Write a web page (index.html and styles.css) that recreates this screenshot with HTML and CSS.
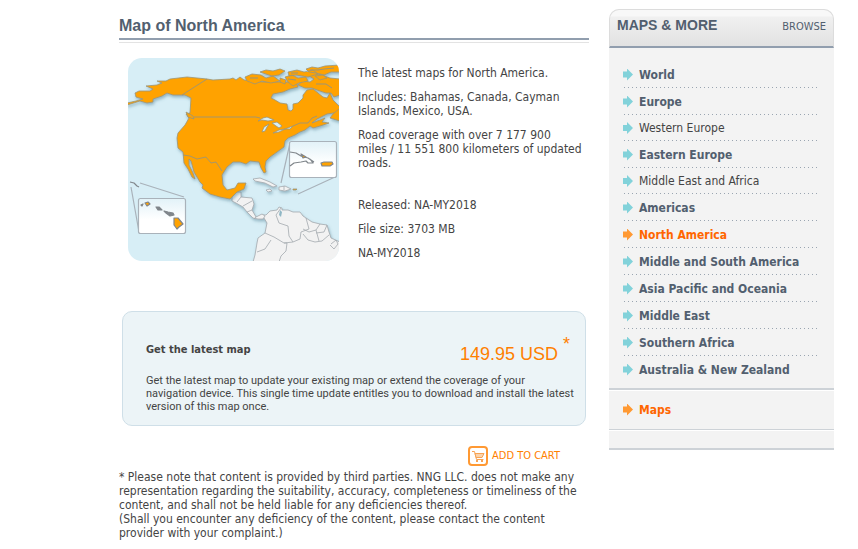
FILE: index.html
```
<!DOCTYPE html>
<html lang="en">
<head>
  <meta charset="UTF-8">
  <meta name="viewport" content="width=device-width, initial-scale=1.0">
  <title>Map of North America</title>
  <link rel="stylesheet" href="styles.css">
</head>
<body>
  <div class="page">
    <main class="content">
      <h1>Map of North America</h1>

      <div class="product">
        <svg class="map" width="211" height="203" viewBox="0 0 211 203" role="img" aria-label="Map of North America">
          <defs>
            <linearGradient id="inset" x1="0" y1="0" x2="0" y2="1">
              <stop offset="0" stop-color="#e2f2f8"/>
              <stop offset="0.6" stop-color="#fff"/>
            </linearGradient>
            <filter id="shadow" x="-10%" y="-10%" width="120%" height="120%">
              <feDropShadow dx="1" dy="2" stdDeviation="1.5" flood-color="#4d7f93" flood-opacity="0.5"/>
            </filter>
          </defs>
          <rect width="211" height="203" fill="#d7eef6"/>

          <!-- South and Central America, Caribbean -->
          <g fill="#f2f2f2" stroke="#a3a9ae" stroke-width="0.8" stroke-linejoin="round" filter="url(#shadow)">
            <path d="M134 157L138 157L142 153L149 152L151 149L154 150L154 152L160 152L165 154L172 154L175 158L178 160L184 164L192 166L199 167L201 174L203 180L212 184V204H125L127 197L129 185L130 180L137 175L139 165L136 160Z"/>
            <path d="M104 139L108 134H113L113 139L124 140L126 146L124 152L128 159L134 156L137 158L135 161L130 161L125 160L119 154L115 149L108 145L104 143Z"/>
            <path d="M113 139L109 144M124 143L115 148M124 152L119 154M128 159L126 161" fill="none"/>
            <path d="M125 121L132 120L142 124L149 128L145 129L137 125L127 123ZM151 129L157 128L163 131L157 133L151 132ZM156 128V132M138 132L142 131L144 133L140 134Z"/>
            <path d="M153 150L148 157L151 165L160 168L161 178L165 184L172 181L173 174L181 171L178 160M192 166L188 172L181 174L175 171M199 167L196 174L188 175M175 176L180 182L187 184L194 183L201 177M188 172L191 183M137 175L146 179L156 185L159 185L158 193L153 198L151 204M156 185L165 184M129 194L137 191L143 182M203 186L208 182L210 186L206 191L202 187" fill="none"/>
          </g>
          <path d="M152 152L154 154L153 159L151 157Z" fill="#90b7c5"/>

          <!-- Canada, USA, Mexico -->
          <g fill="#ffa200" stroke="#9b9578" stroke-width="0.8" stroke-linejoin="round" filter="url(#shadow)">
            <path d="M-1 45L8 43L15 41L8 39L7 35L11 33L22 33L25 31L18 28L29 27L34 25L29 23L38 23L42 21L59 19L79 21L85 22L102 21L105 20L108 22L112 19L116 22L124 23L135 24H159L169 26L170 29L162 31L155 34L145 36L143 40L147 42L152 45L159 46L160 52L163 53L165 51V46L170 45L175 40V37L179 32L185 31L190 35L195 39L199 40L202 35L205 42L212 49V54L199 56L189 61L184 65L192 62L197 60L194 64L201 65L192 68L185 70L182 68L177 72L172 74L167 77L160 80L157 83L156 89L149 94L142 99L138 103L137 109L138 114L136 115L133 110L131 104L122 103L118 106L112 104L105 104L99 109L94 117L95 127L99 132L107 130L110 125H118L116 131L109 134L105 138L102 141L92 139L82 136L74 130L75 127L72 124L66 114L63 103L61 101V107L65 115L67 121L64 119L60 111L56 105L55 94L50 90L49 80L50 75L57 67L61 60L58 56L62 55L63 40L57 37H45L39 35L34 38L25 41V44L19 45L12 43L-1 47Z"/>
            <path d="M212 50L205 56L202 60L212 63ZM198 35L192 33L184 30L177 30L170 27L175 23L182 24L186 21L181 18L185 15L194 17L202 20L212 21V37L206 39L203 35Z"/>
            <path d="M117 19L124 16L133 17L138 20L145 18L152 23L143 25L134 23L127 26L119 23ZM132 14L138 12L145 13L152 11L157 13L151 17L144 18L138 16ZM157 19L164 17L170 20L178 19L180 23L171 25L165 28L160 24ZM160 14L169 12L176 14L185 12L190 16L180 19L168 17L161 18ZM178 11L184 9L190 10L197 8L212 7V14L203 14L196 17L188 15L181 14ZM187 18L195 17L199 20L192 22ZM152 20L158 22L157 26L152 24Z"/>
            <path d="M58 54L65 58L66 61L60 59Z"/>
            <path d="M165 131H169L168 132H165Z"/>
          </g>
          <path d="M182 12L190 12L196 11L206 10M163 15L170 15M160 21L168 22M188 26L198 26L204 30M122 20L130 20" fill="none" stroke="#9b9578"/>
          <g fill="#d7eef6" stroke="#9b9578" stroke-width="0.8">
            <path d="M130 63L135 60L139 59L146 62L140 63L134 62ZM134 74L136 69L141 66L139 69L137 73ZM144 65L149 64L154 68L151 70L148 68ZM145 75L151 72L157 71L151 74ZM157 71L165 68L162 71Z"/>
          </g>
          <g fill="none" stroke="#9b9578" stroke-width="0.9">
            <path d="M79 21L54 37M66 59H128L132 60M165 68L172 65L180 65L184 60L189 58M55 97L62 98L69 101L78 99L83 105L88 104L94 113"/>
          </g>

          <!-- zoomed insets -->
          <g fill="none" stroke="#a9b2ba" stroke-width="1.2">
            <path d="M12 125l44 14M3 129l8 45M162 85l-9 40M207 119l-37 17"/>
            <rect x="10.500" y="140.500" width="47" height="35" rx="2" fill="url(#inset)"/>
            <rect x="161.500" y="83.500" width="47" height="36" rx="2" fill="url(#inset)"/>
          </g>
          <g fill="#ffa200" stroke="#80868b" stroke-width="1.2" stroke-linejoin="round">
            <path d="M46 160l4 0 5 6-4 3-2 2-3-4zM17 145l3-1 2 2-3 2zM13 147l2-1-1 2z"/>
            <path d="M28 149l3 0 3 3-4 0zM36 153l4 1 5 1 1 2-4 1-4-3z" fill="#80868b"/>
            <path d="M193 105l3-1h8l1 2-3 2h-8z"/>
            <path d="M2 124l4 1 3 3 2 1" fill="none"/>
            <path d="M162 94l6 1 5 3 7 2 6 4M162 108l4-3 7-1 5-1 2 2 5 0-3-4" fill="none"/>
            <path d="M173 96l5 3-3 1z"/>
          </g>
        </svg>

        <div class="info">
          <p>The latest maps for North America.</p>
          <p>Includes: Bahamas, Canada, Cayman Islands, Mexico, USA.</p>
          <p>Road coverage with over 7 177 900 miles&nbsp;/ 11 551 800 kilometers of updated roads.</p>
          <div class="release">
            <p>Released: NA-MY2018</p>
            <p>File size: 3703 MB</p>
            <p>NA-MY2018</p>
          </div>
        </div>
      </div>

      <section class="offer">
        <div class="offer-head">
          <h2>Get the latest map</h2>
          <div class="price">149.95 USD <sup>*</sup></div>
        </div>
        <p>Get the latest map to update your existing map or extend the coverage of your navigation device. This single time update entitles you to download and install the latest version of this map once.</p>
      </section>

      <button class="add-cart" type="button">
        <svg width="20" height="20" viewBox="0 0 20 20" fill="none" aria-hidden="true">
          <rect x="1" y="1" width="18" height="18" rx="3" stroke="#ff9933" stroke-width="2"/>
          <path d="M4 5.500h2.500l2 8h7" stroke="#f7a354"/>
          <path d="M7 7.500h9l-2 4h-6z" fill="#fbd3ab" stroke="#f7a354"/>
          <path d="M8 15h2M13 15h2" stroke="#f7a354" stroke-width="2"/>
        </svg>
        <span>ADD TO CART</span>
      </button>

      <p class="note">* Please note that content is provided by third parties. NNG LLC. does not make any representation regarding the suitability, accuracy, completeness or timeliness of the content, and shall not be held liable for any deficiencies thereof.<br>
      (Shall you encounter any deficiency of the content, please contact the content provider with your complaint.)</p>
    </main>

    <aside class="sidebar">
      <div class="sidebar-head">
        <h2>MAPS &amp; MORE</h2>
        <a href="#">BROWSE</a>
      </div>
      <ul class="menu">
        <li><a href="#">World</a></li>
        <li><a href="#">Europe</a></li>
        <li class="sub"><a href="#">Western Europe</a></li>
        <li><a href="#">Eastern Europe</a></li>
        <li class="sub"><a href="#">Middle East and Africa</a></li>
        <li><a href="#">Americas</a></li>
        <li class="active"><a href="#">North America</a></li>
        <li><a href="#">Middle and South America</a></li>
        <li><a href="#">Asia Pacific and Oceania</a></li>
        <li><a href="#">Middle East</a></li>
        <li><a href="#">Southern Africa</a></li>
        <li><a href="#">Australia &amp; New Zealand</a></li>
      </ul>
      <ul class="menu menu-type">
        <li class="active"><a href="#">Maps</a></li>
      </ul>
      <div class="sidebar-foot"></div>
    </aside>
  </div>
</body>
</html>
```
FILE: styles.css
```
* {
  box-sizing: border-box;
}
body {
  margin: 0;
  background: #fff;
  color: #444;
  font-family: Tahoma, "DejaVu Sans Condensed", "DejaVu Sans", sans-serif;
  font-size: 12px;
  line-height: 14px;
}
h1, h2, p, ul {
  margin: 0;
  padding: 0;
}
a {
  color: inherit;
  text-decoration: none;
}
.page {
  display: flex;
  align-items: flex-start;
  gap: 20px;
  padding: 9px 24px 9px 119px;
}
.content {
  flex: 1;
  min-width: 0;
}
h1 {
  padding: 7px 0 2px;
  border-bottom: 2px solid #919eae;
  color: #525f6f;
  font: bold 16px/20px "Liberation Sans", Arial, sans-serif;
}
h1 + .product {
  margin-top: 2px;
  border-top: 1px solid #e3e3e3;
}

/* Product */
.product {
  display: flex;
  gap: 19px;
  padding: 15px 0 0 9px;
}
.map {
  flex: none;
  border-radius: 14px;
}
.info {
  padding-top: 8px;
}
.info p {
  margin-bottom: 10px;
}
.release {
  margin-top: 28px;
}

/* Price box */
.offer {
  margin: 41px 3px 0;
  padding: 24px 7px 12px 23px;
  background: #ecf4f7;
  border: 1px solid #cfdfe8;
  border-radius: 10px;
  font-size: 11px;
  line-height: 13px;
}
.offer-head {
  display: flex;
  justify-content: space-between;
  height: 38px;
  padding-right: 8px;
}
.offer h2 {
  padding-top: 7px;
  font-size: 11px;
}
.offer p {
  font-family: Tahoma, Roboto, sans-serif;
}
.price {
  padding-top: 8px;
  color: #ff8000;
  font: 18px/20px "Liberation Sans", Arial, sans-serif;
}
.price sup {
  font-size: 18px;
  line-height: 0;
  vertical-align: 10px;
}
.add-cart {
  display: flex;
  align-items: center;
  gap: 4px;
  margin: 20px 29px 4px auto;
  padding: 0;
  border: 0;
  background: none;
  color: #ff8000;
  font: 11px/14px Tahoma, "DejaVu Sans Condensed", "DejaVu Sans", sans-serif;
  cursor: pointer;
}

/* Sidebar */
.sidebar {
  flex: none;
  width: 225px;
  background: #f3f3f3;
  border-radius: 10px 10px 0 0;
}
.sidebar-head {
  display: flex;
  justify-content: space-between;
  height: 39px;
  padding: 5px 7px 0;
  border: solid #dcdcdc;
  border-width: 1px 1px 0;
  border-bottom: 2px solid #919eae;
  border-radius: 10px 10px 0 0;
  background: linear-gradient(#f8f8f8 6px, #f0f0f0 7px, #e2e2e2);
  color: #525f6f;
}
.sidebar-head h2 {
  font: bold 14px/20px "Liberation Sans", Arial, sans-serif;
}
.sidebar-head a {
  padding-top: 5px;
  font-size: 11px;
}
.menu {
  padding: 13px 15px 5px 14px;
  border-bottom: 2px solid #cdd2d7;
  list-style: none;
}
.menu li {
  display: flex;
  height: 27px;
  background: linear-gradient(90deg, #9aa5b1 1px, transparent 1px) 1px 100% / 4px 1px repeat-x;
}
.menu li:last-child {
  background: none;
}
.menu a {
  display: flex;
  align-items: center;
  gap: 6px;
  flex: 1;
  color: #525f6f;
  font-weight: bold;
}
.menu a::before {
  content: "";
  width: 10px;
  height: 12px;
  background: #82d2da;
  clip-path: polygon(0 25%, 40% 25%, 40% 0, 100% 50%, 40% 100%, 40% 75%, 0 75%);
}
.menu .sub {
  height: 26px;
}
.menu .sub a {
  color: #444;
  font-weight: normal;
}
.menu .active a {
  color: #ff6600;
}
.menu .active a::before {
  background: #ff9933;
}
.menu-type {
  padding: 5px 15px 6px 14px;
  border-top: 1px solid #fff;
  border-bottom-width: 1px;
}
.sidebar-foot {
  height: 20px;
  border-top: 1px solid #fff;
  border-bottom: 2px solid #cdd2d7;
}
```
